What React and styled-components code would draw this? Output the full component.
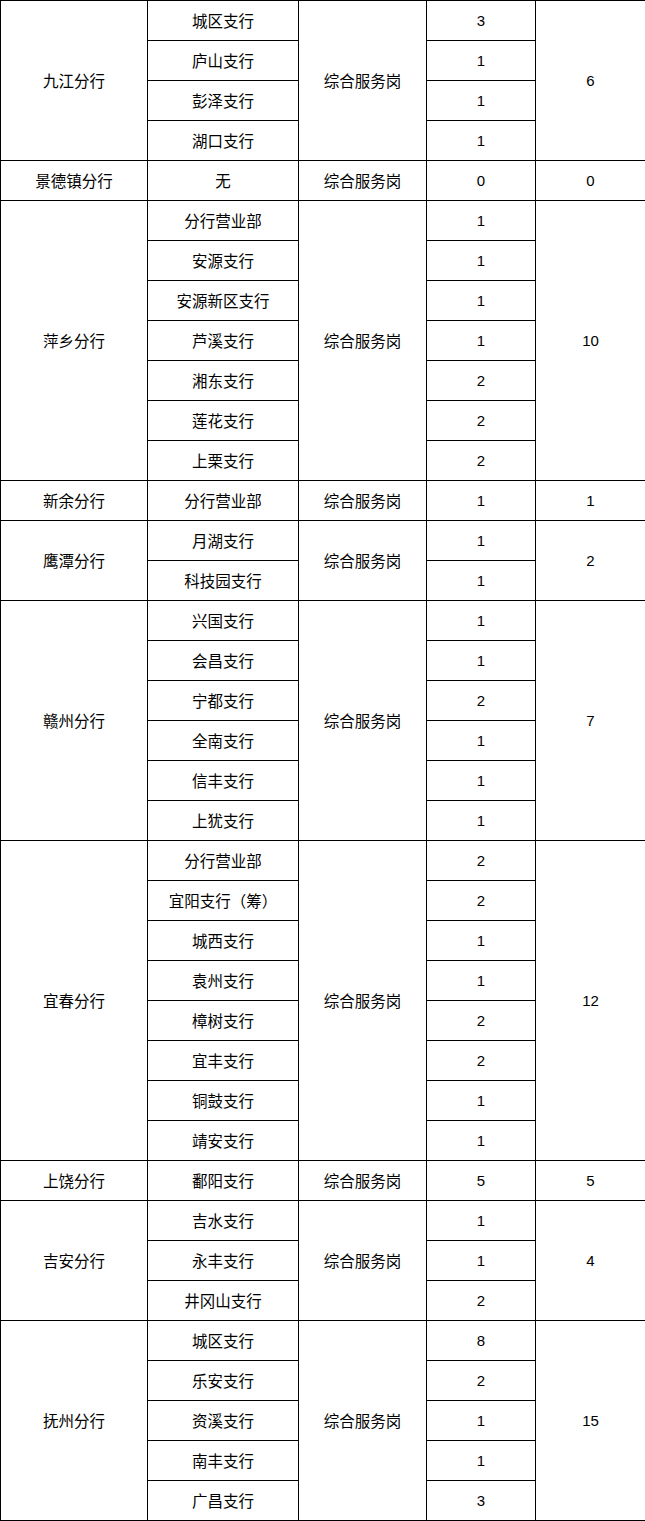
import React from "react";
import styled, { createGlobalStyle } from "styled-components";

const Global = createGlobalStyle`
  html, body { margin: 0; padding: 0; background: #fff; }
  body { font-family: "Noto Sans CJK SC", "Liberation Sans", sans-serif; }
`;

const Table = styled.table`
  width: 645px;
  border-collapse: collapse;
  table-layout: fixed;
  color: #000;
`;

const Col = styled.col`
  width: ${(p) => p.$w}px;
`;

const Row = styled.tr`
  height: 40px;
`;

const Cell = styled.td`
  border: 1px solid #000;
  padding: ${(p) => (p.$num ? "1px 0 0" : "0 0 2px")};
  text-align: center;
  vertical-align: middle;
  line-height: 20px;
  font-size: ${(p) => (p.$num ? "15px" : "15.5px")};
  font-family: ${(p) =>
    p.$num ? '"Liberation Sans", sans-serif' : '"Noto Sans CJK SC", sans-serif'};
  font-weight: 400;
`;

const widths = [147, 151, 128, 109, 110];

const data = [
  { name: "九江分行", total: 6, items: [["城区支行", 3], ["庐山支行", 1], ["彭泽支行", 1], ["湖口支行", 1]] },
  { name: "景德镇分行", total: 0, items: [["无", 0]] },
  { name: "萍乡分行", total: 10, items: [["分行营业部", 1], ["安源支行", 1], ["安源新区支行", 1], ["芦溪支行", 1], ["湘东支行", 2], ["莲花支行", 2], ["上栗支行", 2]] },
  { name: "新余分行", total: 1, items: [["分行营业部", 1]] },
  { name: "鹰潭分行", total: 2, items: [["月湖支行", 1], ["科技园支行", 1]] },
  { name: "赣州分行", total: 7, items: [["兴国支行", 1], ["会昌支行", 1], ["宁都支行", 2], ["全南支行", 1], ["信丰支行", 1], ["上犹支行", 1]] },
  { name: "宜春分行", total: 12, items: [["分行营业部", 2], ["宜阳支行（筹）", 2], ["城西支行", 1], ["袁州支行", 1], ["樟树支行", 2], ["宜丰支行", 2], ["铜鼓支行", 1], ["靖安支行", 1]] },
  { name: "上饶分行", total: 5, items: [["鄱阳支行", 5]] },
  { name: "吉安分行", total: 4, items: [["吉水支行", 1], ["永丰支行", 1], ["井冈山支行", 2]] },
  { name: "抚州分行", total: 15, items: [["城区支行", 8], ["乐安支行", 2], ["资溪支行", 1], ["南丰支行", 1], ["广昌支行", 3]] },
];

export default function App() {
  return (
    <>
      <Global />
      <Table>
        <colgroup>
          {widths.map((w, i) => (
            <Col key={i} $w={w} />
          ))}
        </colgroup>
        <tbody>
          {data.flatMap((g) =>
            g.items.map(([branch, n], i) => (
              <Row key={g.name + i}>
                {i === 0 && <Cell rowSpan={g.items.length}>{g.name}</Cell>}
                <Cell>{branch}</Cell>
                {i === 0 && <Cell rowSpan={g.items.length}>综合服务岗</Cell>}
                <Cell $num>{n}</Cell>
                {i === 0 && (
                  <Cell $num rowSpan={g.items.length}>
                    {g.total}
                  </Cell>
                )}
              </Row>
            ))
          )}
        </tbody>
      </Table>
    </>
  );
}
